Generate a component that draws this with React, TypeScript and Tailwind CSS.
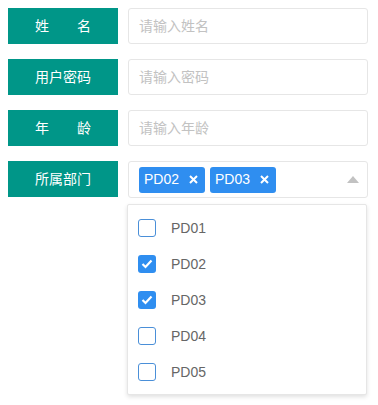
import React from "react";

const FONT = { fontFamily: '"Liberation Sans", "Noto Sans CJK SC", sans-serif' };

function Label({ text }: { text: string }) {
  return (
    <div className="w-[110px] h-9 shrink-0 bg-[#009688] text-white text-[14px] flex items-center justify-center">
      <span className="whitespace-pre">{text}</span>
    </div>
  );
}

function TextRow({ label, placeholder }: { label: string; placeholder: string }) {
  return (
    <div className="flex items-center gap-[10px]">
      <Label text={label} />
      <div className="w-[240px] h-9 border border-[#e6e6e6] rounded-[3px] flex items-center px-[10px] text-[14px] text-[#c2c2c2]">
        {placeholder}
      </div>
    </div>
  );
}

function Tag({ name }: { name: string }) {
  return (
    <div className="h-[26px] bg-[#2f8ef0] rounded-[3px] text-white text-[14px] flex items-center pl-[5px] pr-[7px] gap-[10px]">
      <span>{name}</span>
      <svg width="9" height="9" viewBox="0 0 9 9">
        <path d="M1 1 L8 8 M8 1 L1 8" stroke="white" strokeWidth="2" />
      </svg>
    </div>
  );
}

function Check({ checked }: { checked: boolean }) {
  if (checked) {
    return (
      <div className="w-[18px] h-[18px] rounded-[3px] bg-[#2f8ef0] flex items-center justify-center">
        <svg width="12" height="10" viewBox="0 0 12 10">
          <path d="M1.5 5 L4.5 8 L10.5 1.5" stroke="white" strokeWidth="2.2" fill="none" />
        </svg>
      </div>
    );
  }
  return <div className="w-[18px] h-[18px] rounded-[3px] border border-[#4a8fd8] bg-white" />;
}

export default function App() {
  const items = [
    { name: "PD01", checked: false },
    { name: "PD02", checked: true },
    { name: "PD03", checked: true },
    { name: "PD04", checked: false },
    { name: "PD05", checked: false },
  ];
  return (
    <div className="w-[378px] h-[405px] bg-white pt-2 pl-2 flex flex-col gap-[15px]" style={FONT}>
      <TextRow label={"姓\u3000\u3000名"} placeholder="请输入姓名" />
      <TextRow label="用户密码" placeholder="请输入密码" />
      <TextRow label={"年\u3000\u3000龄"} placeholder="请输入年龄" />
      <div className="flex items-start gap-[10px]">
        <Label text="所属部门" />
        <div className="flex flex-col gap-[6px]">
          <div className="w-[240px] h-[37px] border border-[#e6e6e6] rounded-[3px] flex items-center pl-[10px] pr-[8px]">
            <div className="flex gap-[5px] flex-1">
              <Tag name="PD02" />
              <Tag name="PD03" />
            </div>
            <svg width="12" height="7" viewBox="0 0 12 7">
              <path d="M0 7 L6 0 L12 7 Z" fill="#c2c2c2" />
            </svg>
          </div>
          <div className="w-[240px] -ml-px border border-[#e6e6e6] rounded-[2px] bg-white shadow-[0_2px_4px_rgba(0,0,0,0.12)] pt-[5px] pb-[4px]">
            {items.map((it) => (
              <div key={it.name} className="h-9 flex items-center pl-[10px] gap-[15px]">
                <Check checked={it.checked} />
                <span className="text-[14px] text-[#666]">{it.name}</span>
              </div>
            ))}
          </div>
        </div>
      </div>
    </div>
  );
}
